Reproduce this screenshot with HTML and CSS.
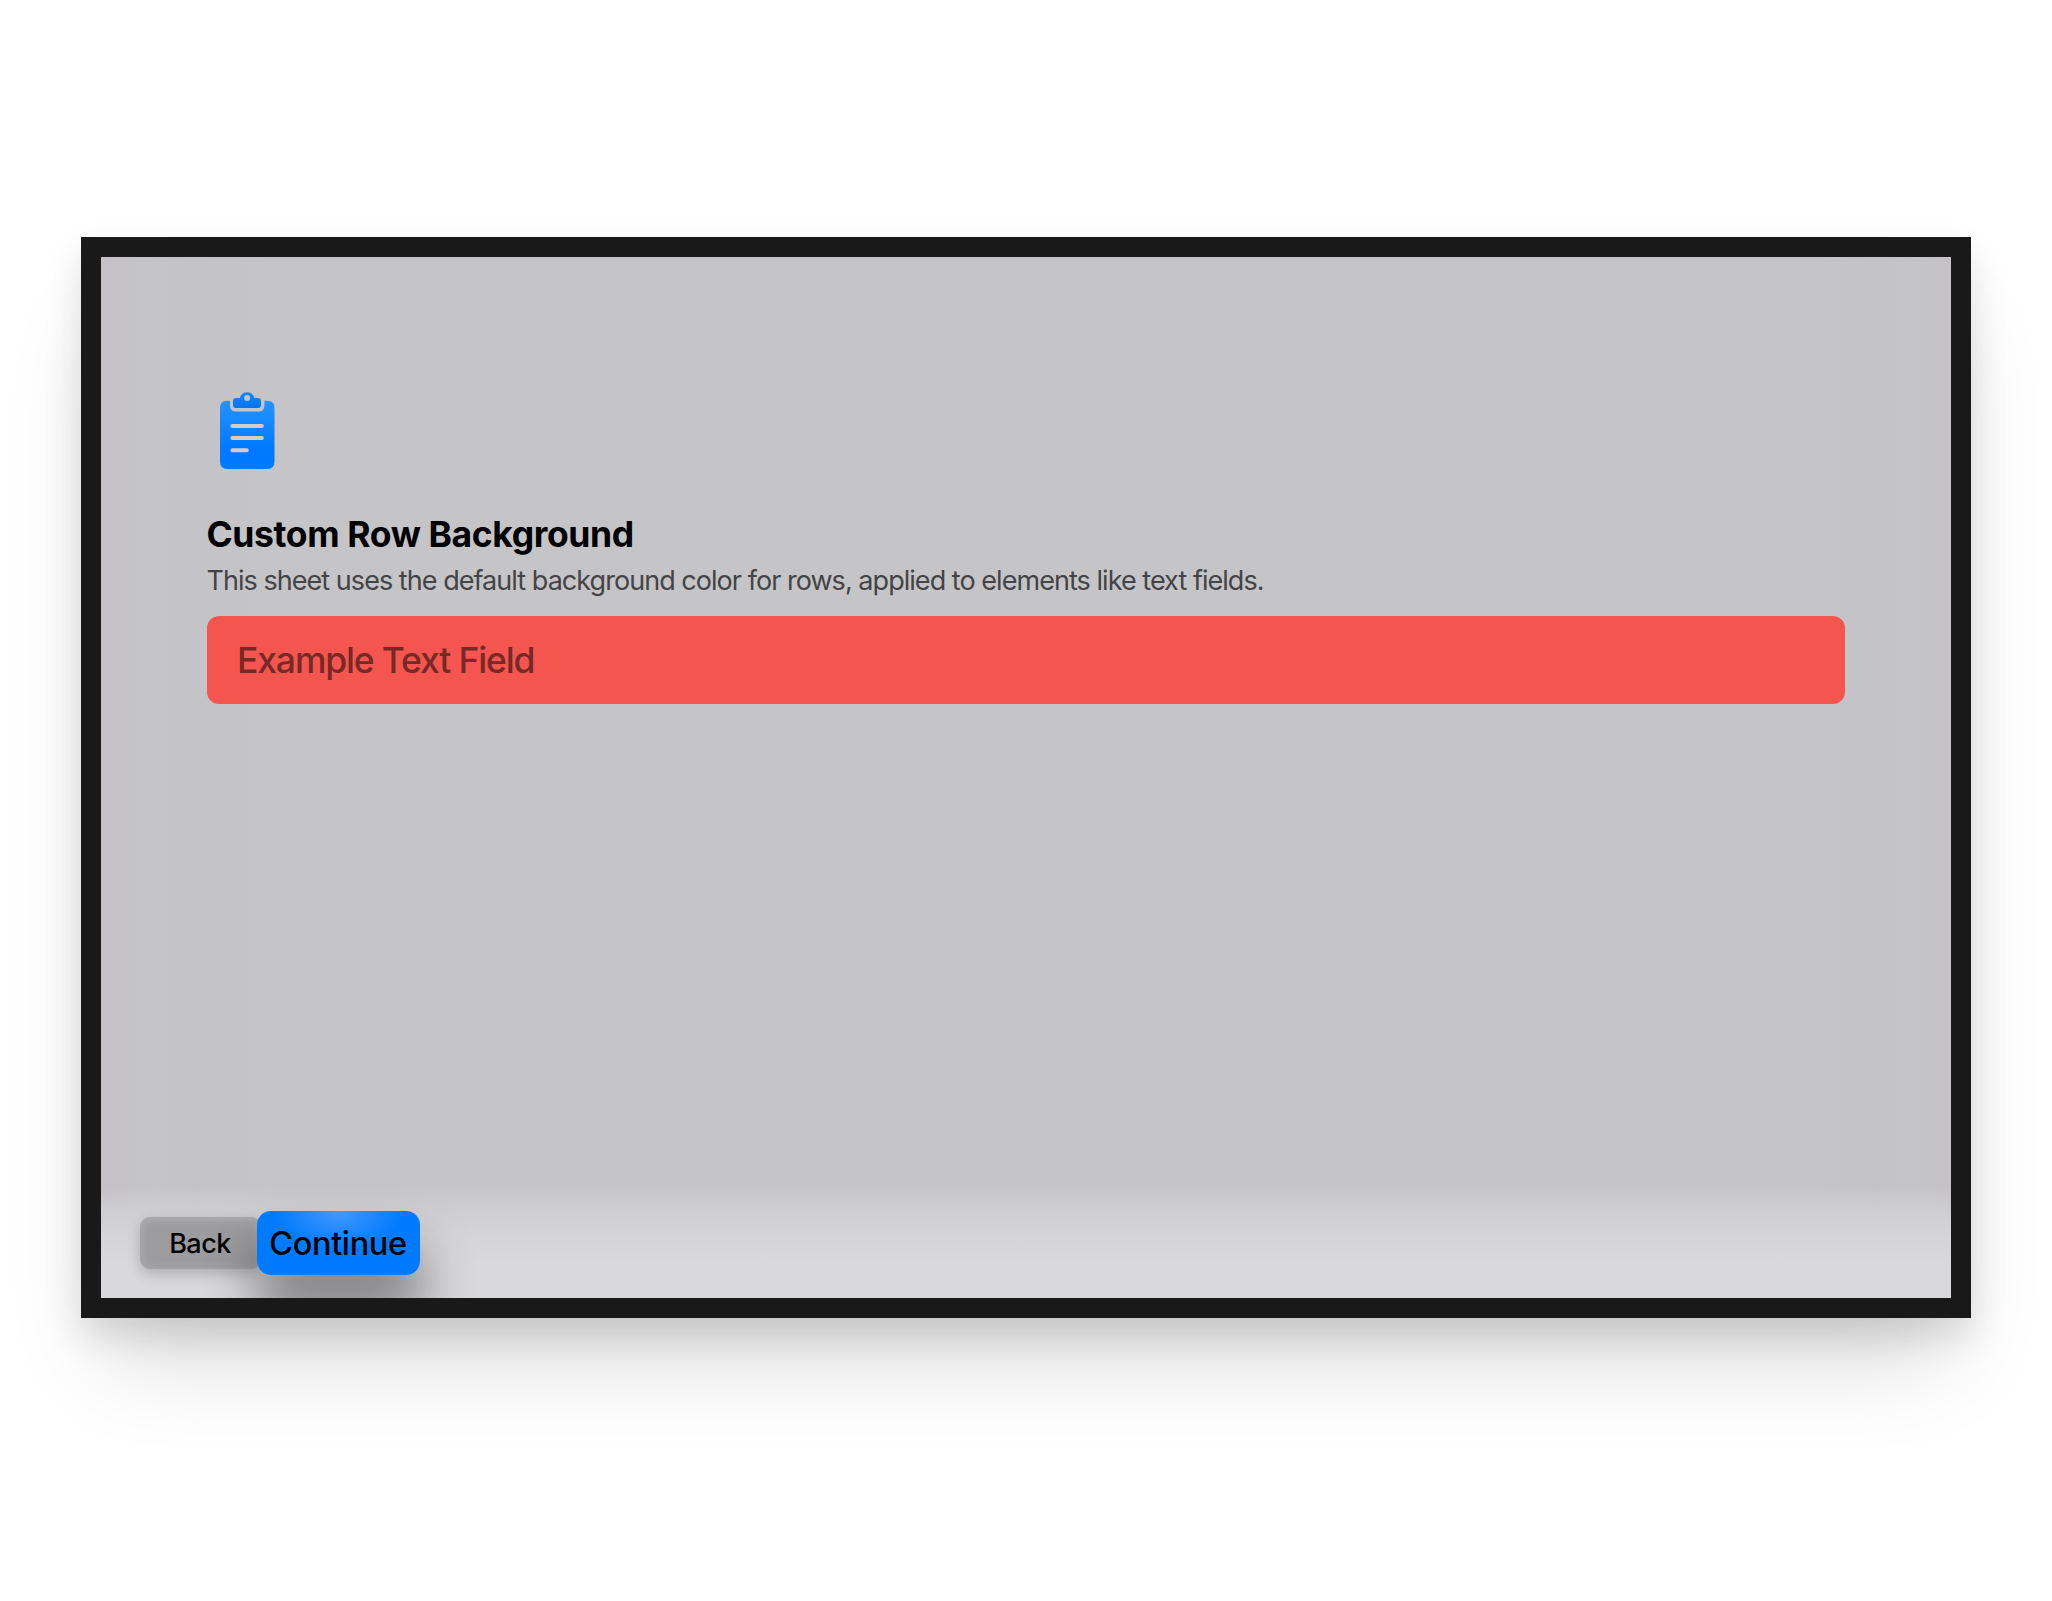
FILE: index.html
```html
<!DOCTYPE html>
<html lang="en">
<head>
<meta charset="utf-8">
<title>Custom Row Background</title>
<link rel="stylesheet" href="styles.css">
</head>
<body>
<main class="screen">
  <section class="sheet">
    <svg class="clipboard" viewBox="0 0 60 82" aria-hidden="true">
      <defs>
        <linearGradient id="blue" gradientUnits="userSpaceOnUse" x1="0" y1="2" x2="0" y2="60">
          <stop offset="0" stop-color="#2e97ff"/>
          <stop offset="1" stop-color="#007aff"/>
        </linearGradient>
        <linearGradient id="clip" x1="0" y1="0" x2="0" y2="1">
          <stop offset="0" stop-color="#1487ff"/>
          <stop offset="1" stop-color="#0873ed"/>
        </linearGradient>
      </defs>
      <path fill="url(#blue)" d="M11 10.8H9.2Q2 10.8 2 18V71.5Q2 79 9.5 79H49Q56.5 79 56.5 71.5V18Q56.5 10.8 49.3 10.8H46.4V15.6Q46.4 21.6 40.4 21.6H18Q12 21.6 12 15.6V10.8Z"/>
      <path fill="url(#clip)" fill-rule="evenodd" d="M18 8H21.9A7.4 7.4 0 0 1 36.3 8H40Q43 8 43 11V15Q43 18 40 18H18Q15 18 15 15V11Q15 8 18 8ZM29.1 5A3 3 0 1 0 29.1 11A3 3 0 1 0 29.1 5Z"/>
      <path fill="none" stroke="#d1cdc9" stroke-width="4" stroke-linecap="round" d="M14.4 36.1H43.8M14.4 48H43.8M14.4 60.3H28.8"/>
    </svg>
    <h1 class="title">Custom Row Background</h1>
    <p class="subtitle">This sheet uses the default background color for rows, applied to elements like text fields.</p>
    <div class="field">Example Text Field</div>
  </section>
  <footer class="bar">
    <button class="button back">Back</button>
    <button class="button continue">Continue</button>
  </footer>
</main>
</body>
</html>
```
FILE: styles.css
```css
* {
  box-sizing: border-box;
}

body {
  margin: 0;
  height: 1601px;
  padding: 237px 81px 283px 80.5px;
  background: #fff;
  font-family: Inter, "Liberation Sans", sans-serif;
  overflow: hidden;
}

.screen {
  display: flex;
  flex-direction: column;
  height: 1081px;
  border: 20px solid #191919;
  background: linear-gradient(90deg, #c4c1c8 0, #c5c5c6 3%, #c4c3c8 5%, #c5c5c7 9%, #c5c5c7 93%, #c4c3c8 96%, #c5c5c6 97.5%, #c4c2c8 100%);
  box-shadow: 0 18px 36px rgba(0, 0, 0, 0.12), 0 64px 90px -24px rgba(0, 0, 0, 0.15);
}

.sheet {
  flex: 1;
  display: flex;
  flex-direction: column;
  align-items: flex-start;
  padding: 133px 106px 0 106px;
}

.clipboard {
  width: 60px;
  height: 82px;
  margin: 0 0 42px 11.5px;
}

.title {
  margin: 0 0 8px;
  font-size: 35.5px;
  font-weight: 700;
  line-height: 42px;
  letter-spacing: -0.39px;
  color: #000;
  white-space: nowrap;
}

.subtitle {
  margin: 0 0 18px;
  font-size: 27px;
  line-height: 34px;
  letter-spacing: -0.96px;
  color: #444446;
  white-space: nowrap;
}

.field {
  width: 100%;
  height: 88px;
  padding: 1px 0 0 30.5px;
  border-radius: 12px;
  background: #f4564f;
  color: #762925;
  font-size: 35.5px;
  font-weight: 450;
  line-height: 88px;
  letter-spacing: -1.15px;
}

.bar {
  display: flex;
  align-items: center;
  height: 111px;
  padding: 0 0 0 39px;
  background: linear-gradient(rgba(206, 205, 208, 0), #cecdd0 22px, #d5d5d8 50px, #d9d9dc 80px);
  overflow: hidden;
}

.button {
  flex: none;
  padding: 1px 0 0;
  border: 0;
  color: #000;
  font-family: inherit;
  font-weight: 500;
  white-space: nowrap;
}

.back {
  width: 121px;
  height: 52px;
  border-radius: 10px;
  background: #9c9c9e;
  box-shadow: inset 0 2px 12px rgba(190, 190, 192, 0.7), 0 5px 14px rgba(0, 0, 0, 0.2);
  font-size: 27px;
  letter-spacing: -0.5px;
}

.continue {
  width: 163px;
  height: 64px;
  margin-left: -4px;
  border-radius: 14px;
  background: radial-gradient(ellipse 65px 40px at 50% 0, #4499ff, #007aff);
  box-shadow: 0 38px 52px 2px rgba(0, 0, 0, 0.42);
  font-size: 32.5px;
  letter-spacing: -0.4px;
}
```
